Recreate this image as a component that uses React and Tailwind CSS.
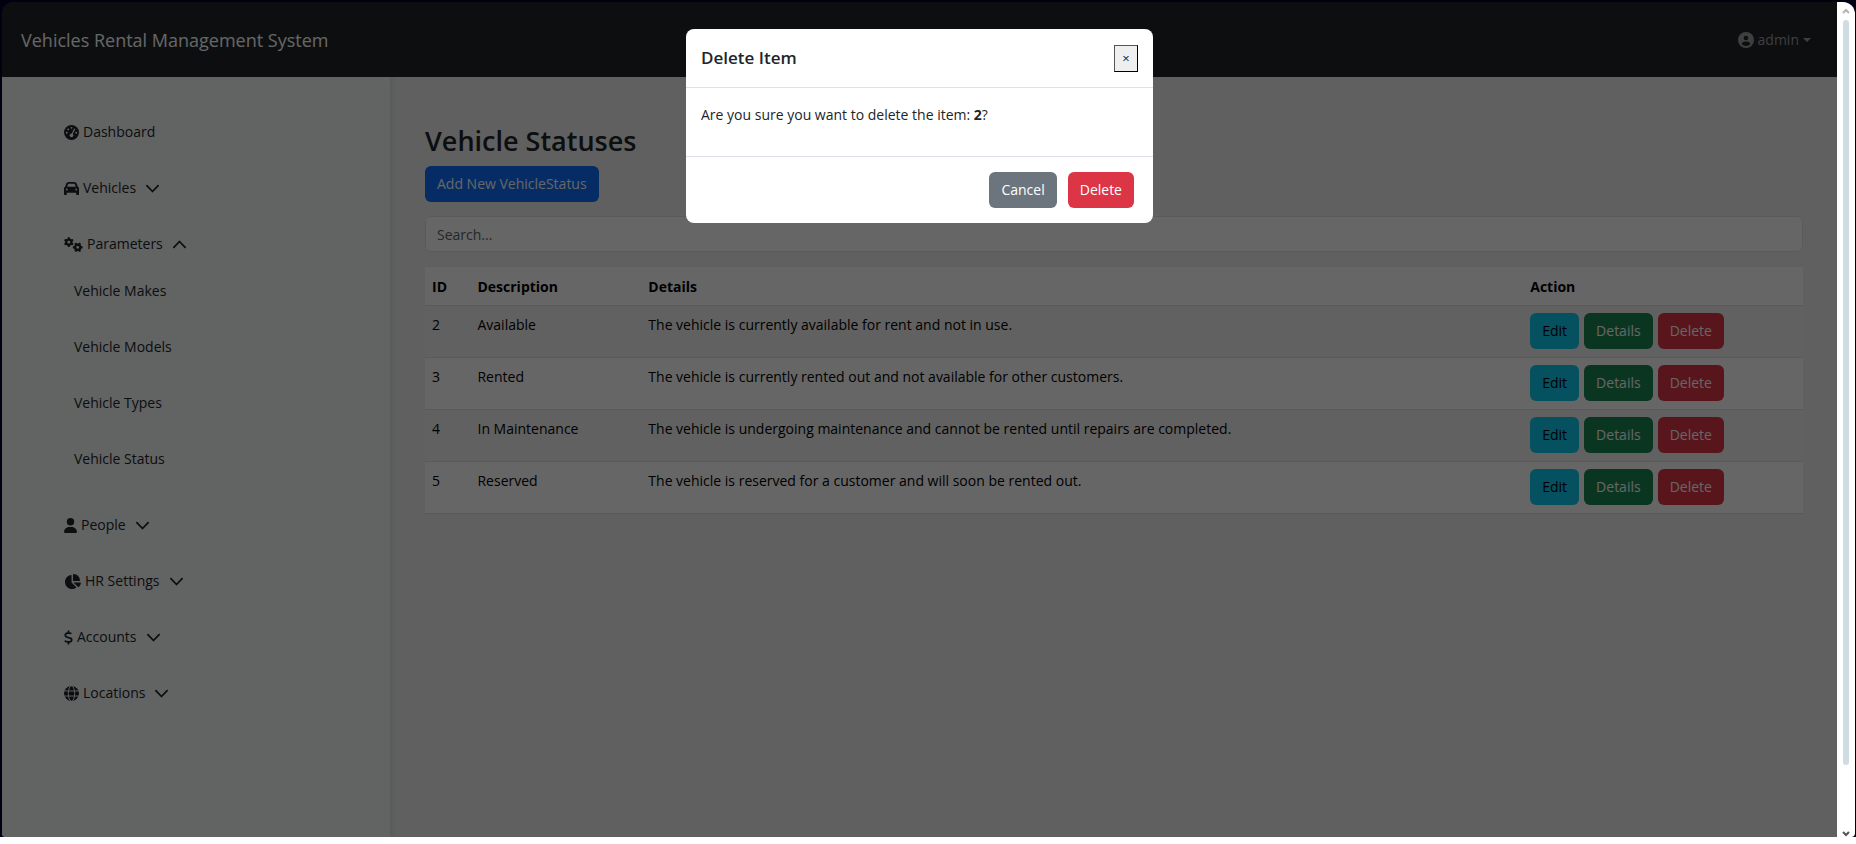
import { FaCar, FaGears, FaUser, FaChartPie, FaDollarSign } from 'react-icons/fa6';

function Chevron({ up = false }) {
  return (
    <svg viewBox="0 0 16 16" className="h-[15px] w-[15px]" fill="none" stroke="currentColor" strokeWidth="1.9" strokeLinecap="round" strokeLinejoin="round" aria-hidden="true">
      <path d={up ? 'M2 11 L8 4.8 L14 11' : 'M2 5 L8 11.2 L14 5'} />
    </svg>
  );
}

function DashboardIcon() {
  return (
    <svg viewBox="0 0 16 16" className="h-[15px] w-[15px]" aria-hidden="true">
      <circle cx="8" cy="8" r="8" fill="currentColor" />
      <g fill="#f5f8f7">
        <circle cx="8" cy="3" r="1" />
        <circle cx="4.5" cy="4.6" r="1" />
        <circle cx="3" cy="8.2" r="1" />
        <circle cx="13" cy="8.2" r="1" />
      </g>
      <path d="M11.3 4.4 L8.6 9.6" stroke="#f5f8f7" strokeWidth="1.2" strokeLinecap="round" />
      <circle cx="8" cy="11" r="2" fill="#f5f8f7" />
    </svg>
  );
}

function GlobeIcon() {
  return (
    <svg viewBox="0 0 16 16" className="h-[15px] w-[15px]" aria-hidden="true">
      <circle cx="8" cy="8" r="8" fill="currentColor" />
      <g stroke="#f5f8f7" strokeWidth="1" fill="none">
        <path d="M0 5.3H16M0 10.7H16" />
        <ellipse cx="8" cy="8" rx="3.4" ry="8.2" />
      </g>
    </svg>
  );
}

function UserCircle() {
  return (
    <svg viewBox="0 0 16 16" className="h-4 w-4" aria-hidden="true">
      <circle cx="8" cy="8" r="8" fill="currentColor" />
      <circle cx="8" cy="6" r="2.3" fill="#212529" />
      <path d="M3.6 12.2 C4.2 10.3 5.4 9.6 8 9.6 S11.8 10.3 12.4 12.2 A6.2 6.2 0 0 1 3.6 12.2Z" fill="#212529" />
    </svg>
  );
}

const menu = [
  { label: 'Dashboard', icon: <DashboardIcon /> },
  { label: 'Vehicles', icon: <FaCar className="h-[15px] w-[15px]" />, expandable: true },
  {
    label: 'Parameters',
    icon: <FaGears className="h-[15px] w-[19px]" />,
    expandable: true,
    children: ['Vehicle Makes', 'Vehicle Models', 'Vehicle Types', 'Vehicle Status'],
  },
  { label: 'People', icon: <FaUser className="h-[15px] w-[13px]" />, expandable: true },
  { label: 'HR Settings', icon: <FaChartPie className="h-[15px] w-[17px]" />, expandable: true },
  { label: 'Accounts', icon: <FaDollarSign className="h-[15px] w-[9px]" />, expandable: true },
  { label: 'Locations', icon: <GlobeIcon />, expandable: true },
];

const rows = [
  [2, 'Available', 'The vehicle is currently available for rent and not in use.'],
  [3, 'Rented', 'The vehicle is currently rented out and not available for other customers.'],
  [4, 'In Maintenance', 'The vehicle is undergoing maintenance and cannot be rented until repairs are completed.'],
  [5, 'Reserved', 'The vehicle is reserved for a customer and will soon be rented out.'],
];

const btn = 'h-9 rounded-md px-3';

function Sidebar() {
  return (
    <nav className="z-10 w-[388px] shrink-0 bg-[#f5f8f7] pt-[27px] pl-[62px] text-[#212529] shadow-[1px_0_6px_rgba(0,0,0,0.12)]">
      <ul>
        {menu.map((item) => (
          <li key={item.label} className={item.children ? 'pb-[10px]' : ''}>
            {item.expandable ? (
              <button className="flex h-14 w-full items-center" aria-expanded={!!item.children}>
                {item.icon}
                <span className="ml-1 mr-[9px]">{item.label}</span>
                <Chevron up={!!item.children} />
              </button>
            ) : (
              <a href="#dashboard" className="flex h-14 items-center">
                {item.icon}
                <span className="ml-1">{item.label}</span>
              </a>
            )}
            {item.children && (
              <ul className="-mt-[9px] pl-[10px]">
                {item.children.map((c) => (
                  <li key={c}>
                    <a href="#item" className="flex h-14 items-center">{c}</a>
                  </li>
                ))}
              </ul>
            )}
          </li>
        ))}
      </ul>
    </nav>
  );
}

function Statuses() {
  return (
    <main className="min-w-0 flex-1 bg-[#f0f0f0] pt-[46px] pr-[34px] pl-[35px]">
      <h1 className="mb-2 text-[27px] leading-[35px] font-semibold text-[#212529]">Vehicle Statuses</h1>
      <button className={`${btn} mb-[14px] block bg-[#0d6efd] text-white`}>Add New VehicleStatus</button>
      <input
        aria-label="Search"
        placeholder="Search..."
        className="mb-[15px] block h-9 w-full rounded-md border border-[#dee2e6] bg-white px-[11px] placeholder:text-[#5c636a]"
      />
      <table className="w-full table-fixed border-collapse text-left text-black">
        <colgroup>
          <col className="w-[3.3%]" />
          <col className="w-[12.4%]" />
          <col className="w-[64%]" />
          <col />
        </colgroup>
        <thead>
          <tr className="h-[38px] border-b border-[#dee2e6] bg-white">
            {['ID', 'Description', 'Details', 'Action'].map((h) => (
              <th key={h} className="px-[7px] pt-[2px] font-bold">{h}</th>
            ))}
          </tr>
        </thead>
        <tbody>
          {rows.map(([id, name, details]) => (
            <tr key={id} className="border-b border-[#dee2e6] bg-white align-top odd:bg-[#f2f2f2]">
              <td className="px-[7px] pt-2">{id}</td>
              <td className="px-[7px] pt-2">{name}</td>
              <td className="px-[7px] pt-2">{details}</td>
              <td className="px-[7px] pt-[7px] pb-2">
                <div className="flex gap-[5px]">
                  <button className={`${btn} bg-[#0dcaf0]`}>Edit</button>
                  <button className={`${btn} bg-[#198754] text-white`}>Details</button>
                  <button className={`${btn} bg-[#dc3545] text-white`}>Delete</button>
                </div>
              </td>
            </tr>
          ))}
        </tbody>
      </table>
    </main>
  );
}

function DeleteDialog() {
  return (
    <div className="absolute inset-0 z-20 flex items-start justify-center bg-black/60 pt-[27px]">
      <div role="dialog" aria-modal="true" aria-labelledby="dialog-title" className="w-[467px] rounded-lg bg-white text-[#212529]">
        <div className="flex h-[59px] items-center justify-between border-b border-[#dee2e6] px-[15px]">
          <h2 id="dialog-title" className="text-[17px] font-semibold">Delete Item</h2>
          <button aria-label="Close" className="h-[27px] w-6 border border-t-[#555] border-r-black border-b-black border-l-[#555] bg-[#efefef] text-[13px] leading-none">×</button>
        </div>
        <div className="h-[69px] border-b border-[#dee2e6] px-[15px] pt-4">
          Are you sure you want to delete the item: <b>2</b>?
        </div>
        <div className="flex justify-end gap-[11px] py-[15px] pr-[19px]">
          <button className={`${btn} bg-[#6c757d] text-white`}>Cancel</button>
          <button className={`${btn} bg-[#dc3545] text-white`}>Delete</button>
        </div>
      </div>
    </div>
  );
}

function Scrollbar() {
  return (
    <div className="flex w-[18px] shrink-0 flex-col items-center bg-white pt-[6px]" aria-hidden="true">
      <svg viewBox="0 0 8 6" className="h-[6px] w-2" fill="none" stroke="#b4b4b4" strokeWidth="2"><path d="M1 5 L4 2 L7 5" /></svg>
      <div className="mt-[6px] w-[6px] flex-[744] rounded-full bg-[#d0dce4]" />
      <div className="flex-[66]" />
      <svg viewBox="0 0 8 6" className="h-[6px] w-2" fill="none" stroke="#555" strokeWidth="2"><path d="M1 1 L4 4 L7 1" /></svg>
    </div>
  );
}

export default function App() {
  return (
    <div className="flex h-screen flex-col bg-white font-['Open_Sans',sans-serif] text-[14px] leading-[22px]">
      <div className="mb-[7px] flex min-h-0 flex-1 bg-[#000212] pt-[2px] pr-px pl-[2px]">
        <div className="flex min-w-0 flex-1 overflow-hidden rounded-t-xl rounded-b-sm">
          <div className="relative flex min-w-0 flex-1 flex-col">
            <header className="flex h-[75px] shrink-0 items-center justify-between bg-[#212529] pr-[26px] pl-[19px]">
              <a href="#home" className="text-[18px] text-white">Vehicles Rental Management System</a>
              <button className="flex items-center gap-1 text-[#9b9d9e]">
                <UserCircle />
                admin
                <svg viewBox="0 0 8 4" className="h-1 w-2" fill="currentColor" aria-hidden="true"><path d="M0 0H8L4 4Z" /></svg>
              </button>
            </header>
            <div className="flex min-h-0 flex-1">
              <Sidebar />
              <Statuses />
            </div>
            <DeleteDialog />
          </div>
          <Scrollbar />
        </div>
      </div>
    </div>
  );
}
